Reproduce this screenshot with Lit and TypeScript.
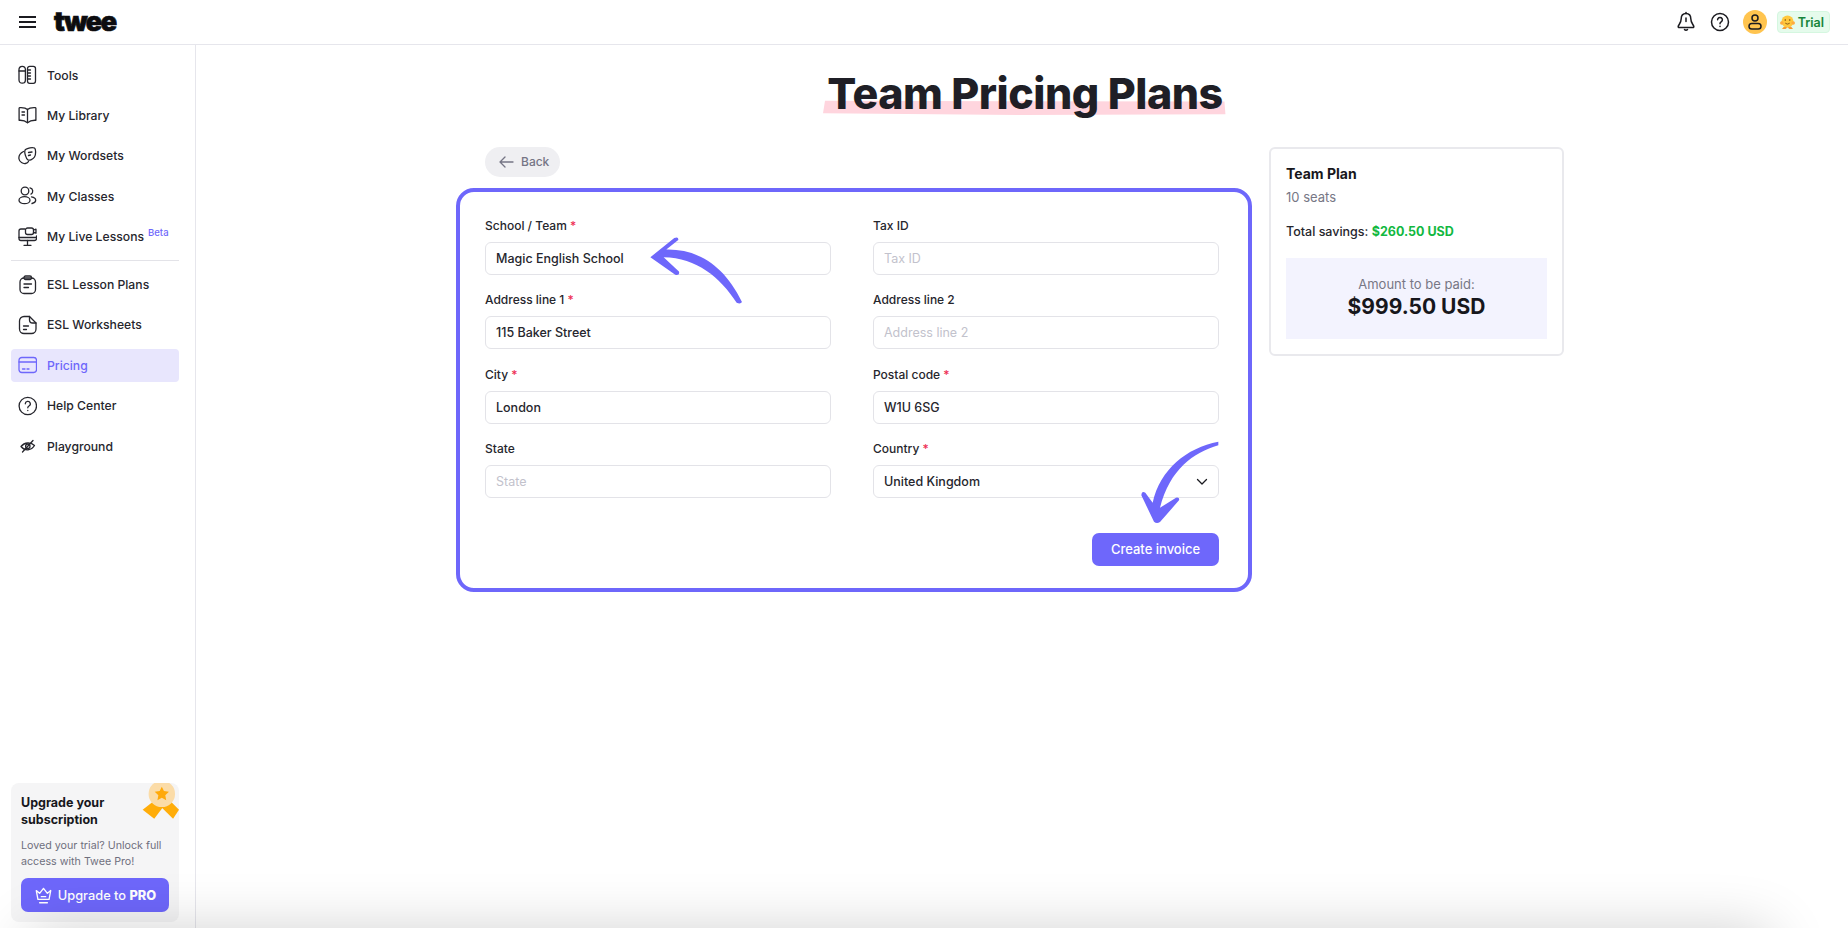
import { LitElement, html, css, svg } from 'lit';
import { customElement } from 'lit/decorators.js';

const navTop = [
  {
    label: 'Tools',
    icon: svg`<path d="M1 4.500a3.200 3.200 0 0 1 6.400 0V15a3.200 3.200 0 0 1-6.400 0z"/><path d="M1 6h6.400"/><rect x="9.500" y="1.300" width="8" height="17" rx="2.200"/><path d="M9.500 5h3M9.500 8h3M9.500 11h3M9.500 14h3"/>`,
  },
  {
    label: 'My Library',
    icon: svg`<path d="M9.500 4.500C8 3 5 2.400 1.700 2.600a.7.7 0 0 0-.6.7v12c3.200-.2 6.100.4 8.400 2.400 2.300-2 5.200-2.600 8.400-2.400v-12a.7.7 0 0 0-.6-.7C14 2.400 11 3 9.500 4.500z"/><path d="M9.500 4.500v13M4 7h2.500M4 10h2.500"/>`,
  },
  {
    label: 'My Wordsets',
    icon: svg`<path d="M7.500 3.500c2-1.500 7-2.500 9-1.500 1.500 1 1.500 6.500 0 9-1.200 2-5 3.800-6.500 3-1.800-1-4.500-8.500-2.500-10.500z"/><path d="M10.500 6.500l3.500-.5M10.500 9.500l2-.5"/><path d="M5.500 5.500C2.500 7 .5 10 1 13c.5 3 4 5 6.500 4.500 1.500-.3 2.500-1 3-2"/>`,
  },
  {
    label: 'My Classes',
    icon: svg`<circle cx="7" cy="5" r="3.800"/><ellipse cx="6.500" cy="14.200" rx="5.500" ry="3.500"/><path d="M12 1.800a3.400 3.400 0 0 1 1 6.300M13.500 10.800c2.500.4 4.200 1.800 4.200 3.500 0 1.500-1.500 2.700-3.700 3.200"/>`,
  },
  {
    label: 'My Live Lessons',
    beta: true,
    icon: svg`<path d="M7 2H3a2 2 0 0 0-2 2v7.500a2 2 0 0 0 2 2h13.500a2 2 0 0 0 2-2V9"/><path d="M1 10.500h17.500M9.500 13.500v4.500M6 18.300h7"/><rect x="7.500" y="1" width="8" height="6.500" rx="2"/><path d="M15.500 3l2.500-.8v4L15.500 5.500"/>`,
  },
];

const navBottom = [
  {
    label: 'ESL Lesson Plans',
    icon: svg`<rect x="2" y="3" width="15.500" height="15.500" rx="4"/><rect x="6" y="1" width="7.500" height="3.500" rx="1.500"/><path d="M6 9h7.500M6 12.500h4.500"/>`,
  },
  {
    label: 'ESL Worksheets',
    icon: svg`<path d="M11.500 1.500H6A4.500 4.500 0 0 0 1.500 6v8A4.500 4.500 0 0 0 6 18.500h7.500a4.500 4.500 0 0 0 4.500-4.500V8z"/><path d="M11.500 1.500V5a3 3 0 0 0 3 3H18"/><path d="M5.500 11h5M5.500 14.500h3"/>`,
  },
  {
    label: 'Pricing',
    active: true,
    icon: svg`<rect x="1" y="2.500" width="17.500" height="15" rx="2.800"/><path d="M1 7h17.500M4.500 14h2.500M9 14h2"/>`,
  },
  {
    label: 'Help Center',
    icon: svg`<circle cx="9.800" cy="10" r="8.700"/><path d="M7.300 7.800a2.500 2.500 0 1 1 3.700 2.200c-.8.500-1.200 1-1.200 1.800"/><path d="M9.800 14.300v.2"/>`,
  },
  {
    label: 'Playground',
    icon: svg`<path d="M3 10.500c3.500-4.500 10-4.500 13.500-1-3 5-9.500 6-13.500 1z"/><circle cx="9.800" cy="10.300" r="2.200"/><path d="M4.500 16L15 4.500"/>`,
  },
];

const rows = [
  [
    { label: 'School / Team', req: true, value: 'Magic English School' },
    { label: 'Tax ID', placeholder: 'Tax ID' },
  ],
  [
    { label: 'Address line 1', req: true, value: '115 Baker Street' },
    { label: 'Address line 2', placeholder: 'Address line 2' },
  ],
  [
    { label: 'City', req: true, value: 'London' },
    { label: 'Postal code', req: true, value: 'W1U 6SG' },
  ],
  [
    { label: 'State', placeholder: 'State' },
    { label: 'Country', req: true, value: 'United Kingdom', select: true },
  ],
];

@customElement('app-root')
export class AppRoot extends LitElement {
  static styles = css`
    :host {
      display: flex;
      flex-direction: column;
      position: relative;
      height: 928px;
      overflow: hidden;
      background: #fff;
      color: #1f1f26;
      font-family: Inter, 'Noto Sans', sans-serif;
      font-size: 13px;
    }

    .header {
      display: flex;
      align-items: center;
      height: 44px;
      padding: 0 18px 0 19px;
      border-bottom: 1px solid #e6e6ec;
      flex: none;
    }

    .menu {
      width: 17px;
      height: 12px;
      margin-right: 18px;
      border-top: 2px solid #1b1b20;
      border-bottom: 2px solid #1b1b20;
      position: relative;
      box-sizing: border-box;
    }

    .menu::after {
      content: '';
      position: absolute;
      left: 0;
      right: 0;
      top: 3px;
      height: 2px;
      background: #1b1b20;
    }

    .logo {
      font-size: 27px;
      font-weight: 900;
      letter-spacing: -1.500px;
      line-height: 1;
      color: #0c0c0f;
      -webkit-text-stroke: 0.7px #0c0c0f;
      position: relative;
      top: -1px;
    }

    .header-right {
      margin-left: auto;
      display: flex;
      align-items: center;
    }

    .header-right svg {
      fill: none;
      stroke: #1b1b20;
      stroke-width: 1.500;
      stroke-linecap: round;
      stroke-linejoin: round;
    }

    .help-icon {
      margin-left: 14px;
    }

    .avatar {
      width: 24px;
      height: 24px;
      border-radius: 50%;
      background: #ffc44f;
      display: flex;
      align-items: center;
      justify-content: center;
      margin: 0 10px 0 13px;
    }

    .trial {
      display: flex;
      align-items: center;
      gap: 3px;
      height: 20px;
      padding: 0 5px 0 2px;
      border-radius: 4px;
      background: #e5fbec;
      border: 1px solid #d5f7e0;
      color: #17853a;
      font-size: 12.500px;
      font-weight: 600;
    }

    .trial svg {
      stroke: none;
    }

    .body {
      display: flex;
      flex: 1;
      min-height: 0;
    }

    .sidebar {
      width: 195px;
      flex: none;
      border-right: 1px solid #e6e6ec;
      display: flex;
      flex-direction: column;
      padding-top: 13.500px;
    }

    .nav {
      display: flex;
      flex-direction: column;
      gap: 7.400px;
      margin: 0 16px 0 11px;
    }

    .nav-item {
      display: flex;
      align-items: center;
      gap: 10px;
      height: 33px;
      padding-left: 7px;
      border-radius: 4px;
      color: #26262d;
      font-size: 12.200px;
      font-weight: 500;
      white-space: nowrap;
    }

    .nav-item svg {
      width: 19px;
      height: 20px;
      flex: none;
      fill: none;
      stroke: currentColor;
      stroke-width: 1.300;
      stroke-linecap: round;
      stroke-linejoin: round;
    }

    .nav-item.active {
      background: #e8e6fd;
      color: #6e67fb;
    }

    .beta {
      font-size: 9.500px;
      color: #6e67fb;
      margin-left: -6px;
      position: relative;
      top: -4px;
    }

    .divider {
      height: 1px;
      background: #e3e3e8;
      margin: 7px 16px 7px 11px;
    }

    .upgrade {
      margin: auto 16px 6px 11px;
      height: 139px;
      box-sizing: border-box;
      padding: 11px 10px 10px;
      background: #f5f5f6;
      border-radius: 8px;
      position: relative;
      overflow: hidden;
      display: flex;
      flex-direction: column;
    }

    .upgrade h4 {
      margin: 0;
      font-size: 12.500px;
      line-height: 17px;
      font-weight: 700;
      color: #17171c;
    }

    .upgrade p {
      margin: 10px 0 0;
      font-size: 10.700px;
      line-height: 15.500px;
      color: #6f6f7d;
    }

    .ribbon {
      position: absolute;
      right: 0;
      top: 0;
      width: 38px;
      height: 38px;
    }

    .upgrade-btn {
      margin-top: auto;
      height: 34px;
      border-radius: 7px;
      background: #6e67fb;
      color: #fff;
      display: flex;
      align-items: center;
      justify-content: center;
      gap: 5px;
      font-size: 12.800px;
      font-weight: 500;
    }

    .upgrade-btn b {
      font-weight: 800;
    }

    .upgrade-btn svg {
      fill: none;
      stroke: #fff;
      stroke-width: 1.200;
      stroke-linecap: round;
      stroke-linejoin: round;
    }

    .main {
      flex: 1;
      min-width: 0;
      display: flex;
      flex-direction: column;
      padding-top: 25.500px;
      padding-left: 260px;
    }

    .title-wrap {
      width: 1108px;
      display: flex;
      justify-content: center;
      padding-left: 30px;
      box-sizing: border-box;
    }

    .title {
      margin: 0;
      font-size: 43px;
      line-height: 44px;
      font-weight: 800;
      letter-spacing: -0.500px;
      color: #1f1f26;
      position: relative;
      z-index: 0;
      padding: 0 4px;
      white-space: nowrap;
    }

    .title svg {
      position: absolute;
      left: 0;
      bottom: -1px;
      width: 100%;
      height: 18px;
      z-index: -1;
    }

    .content {
      display: flex;
      gap: 17px;
      margin-top: 32px;
      align-items: flex-start;
    }

    .left {
      width: 796px;
      flex: none;
    }

    .back {
      display: inline-flex;
      align-items: center;
      gap: 7px;
      height: 30px;
      margin-left: 29px;
      padding: 0 11px 0 14px;
      border-radius: 15px;
      background: #efeff2;
      color: #757585;
      font-size: 12px;
      font-weight: 500;
      box-sizing: border-box;
    }

    .back svg {
      fill: none;
      stroke: #757585;
      stroke-width: 1.300;
      stroke-linecap: round;
      stroke-linejoin: round;
    }

    .card {
      margin-top: 11px;
      height: 404px;
      box-sizing: border-box;
      border: 4px solid #6e67fb;
      border-radius: 18px;
      padding: 25px 29px 22px 25px;
      display: flex;
      flex-direction: column;
      position: relative;
    }

    .form {
      display: grid;
      grid-template-columns: 346px 346px;
      column-gap: 42px;
      row-gap: 16.600px;
    }

    .field label {
      display: block;
      font-size: 12px;
      line-height: 18px;
      font-weight: 500;
      color: #26262d;
      margin-bottom: 7px;
    }

    .req {
      color: #ee2f55;
    }

    .input {
      height: 33px;
      box-sizing: border-box;
      border: 1px solid #e3e3e8;
      border-radius: 6px;
      padding: 0 10px;
      display: flex;
      align-items: center;
      justify-content: space-between;
      font-size: 12.500px;
      font-weight: 500;
      color: #26262d;
    }

    .input.empty {
      color: #c2c2cc;
      font-weight: 400;
    }

    .input svg {
      fill: none;
      stroke: #1b1b20;
      stroke-width: 1.300;
      stroke-linecap: round;
      stroke-linejoin: round;
    }

    .actions {
      margin-top: auto;
      display: flex;
      justify-content: flex-end;
    }

    .create {
      width: 127px;
      height: 33px;
      border-radius: 7px;
      background: #6e67fb;
      color: #fff;
      display: flex;
      align-items: center;
      justify-content: center;
      font-size: 13px;
      font-weight: 500;
    }

    .arrow {
      position: absolute;
      fill: #6e67fb;
      overflow: visible;
    }

    .arrow.one {
      left: 187px;
      top: 42px;
    }

    .arrow.two {
      left: 680px;
      top: 249px;
    }

    .summary {
      width: 295px;
      flex: none;
      box-sizing: border-box;
      height: 209px;
      border: 2px solid #e9e9ed;
      border-radius: 6px;
      padding: 15px 15px 0;
    }

    .summary h3 {
      margin: 0;
      font-size: 14px;
      line-height: 20px;
      font-weight: 700;
      color: #17171c;
    }

    .seats {
      margin-top: 4px;
      line-height: 18px;
      color: #777785;
    }

    .savings {
      margin-top: 17px;
      font-size: 12.500px;
      line-height: 18px;
      font-weight: 500;
      color: #26262d;
    }

    .savings b {
      color: #12b83f;
      font-weight: 700;
    }

    .amount {
      margin-top: 17px;
      height: 81px;
      background: #f3f3fe;
      display: flex;
      flex-direction: column;
      align-items: center;
      justify-content: center;
    }

    .amount span {
      color: #777785;
      line-height: 18px;
    }

    .amount strong {
      font-size: 21px;
      line-height: 28px;
      font-weight: 700;
      color: #17171c;
    }

    .shade {
      position: absolute;
      left: 50px;
      width: 1700px;
      top: 952px;
      height: 40px;
      box-shadow: 0 0 60px 20px rgba(0, 0, 0, 0.2);
      pointer-events: none;
    }
  `;

  renderNav(item: any) {
    return html`
      <div class="nav-item ${item.active ? 'active' : ''}">
        <svg viewBox="0 0 19 20">${item.icon}</svg>
        <span>${item.label}</span>
        ${item.beta ? html`<span class="beta">Beta</span>` : ''}
      </div>
    `;
  }

  renderField(f: any) {
    return html`
      <div class="field">
        <label>${f.label}${f.req ? html` <span class="req">*</span>` : ''}</label>
        <div class="input ${f.value ? '' : 'empty'}">
          <span>${f.value || f.placeholder}</span>
          ${f.select
            ? html`<svg width="12" height="8" viewBox="0 0 12 8"><path d="M1.500 1.500L6 6l4.500-4.500"/></svg>`
            : ''}
        </div>
      </div>
    `;
  }

  render() {
    return html`
      <div class="header">
        <div class="menu"></div>
        <div class="logo">twee</div>
        <div class="header-right">
          <svg width="20" height="22" viewBox="0 0 20 22">
            <path d="M10 2.500c-3 0-4.800 2.200-4.800 5.300 0 4-2.700 6-3 7.700-.1.800.4 1 1 1h13.600c.6 0 1.100-.2 1-1-.3-1.700-3-3.700-3-7.700 0-3.100-1.800-5.300-4.800-5.300z"/>
            <path d="M10 1.500v1M8.500 18.500a2 2 0 0 0 3 0M10 7v3.500"/>
          </svg>
          <svg class="help-icon" width="20" height="20" viewBox="0 0 20 20">
            <circle cx="10" cy="10" r="8.500"/>
            <path d="M7.600 7.800a2.400 2.400 0 1 1 3.600 2.100c-.8.500-1.200 1-1.200 1.800M10 14.200v.2"/>
          </svg>
          <div class="avatar">
            <svg width="14" height="16" viewBox="0 0 14 16">
              <circle cx="7" cy="4" r="3"/>
              <rect x="1" y="9.500" width="12" height="5.500" rx="2.750"/>
            </svg>
          </div>
          <div class="trial">
            <svg width="15" height="15" viewBox="0 0 15 15">
              <circle cx="7.500" cy="6.500" r="6" fill="#ffc83d"/>
              <circle cx="1.800" cy="8" r="1.800" fill="#ffab40"/>
              <circle cx="13.200" cy="8" r="1.800" fill="#ffab40"/>
              <path d="M4 11.500l-2 2.500h3.500l2-1.500 2 1.500H13l-2-2.500-3.500 1z" fill="#f79b2e"/>
              <circle cx="5.300" cy="5" r=".8" fill="#7a4a10"/>
              <circle cx="9.700" cy="5" r=".8" fill="#7a4a10"/>
              <path d="M5 7.500c1.500 1.500 3.500 1.500 5 0-.4 2.500-4.600 2.500-5 0z" fill="#7a4a10"/>
            </svg>
            Trial
          </div>
        </div>
      </div>
      <div class="body">
        <aside class="sidebar">
          <div class="nav">${navTop.map((i) => this.renderNav(i))}</div>
          <div class="divider"></div>
          <div class="nav">${navBottom.map((i) => this.renderNav(i))}</div>
          <div class="upgrade">
            <svg class="ribbon" viewBox="425 39 115 115">
              <path d="M462 95L430 120L465 147L492 112Z" fill="#ffad0a"/>
              <path d="M515 95L540 120L522 147L486 112Z" fill="#ffad0a"/>
              <circle cx="488" cy="72" r="40" fill="#fbdca8"/>
              <path d="M488 50l6.500 13.500 15 2-11 10.500 2.800 15-13.300-7.300-13.300 7.300 2.800-15-11-10.500 15-2z" fill="#ffa90a"/>
            </svg>
            <h4>Upgrade your<br />subscription</h4>
            <p>Loved your trial? Unlock full access with Twee Pro!</p>
            <div class="upgrade-btn">
              <svg width="19" height="20" viewBox="0 0 17 18">
                <path d="M2 5l3 2.500L8.500 3 12 7.500 15 5l-1.500 8h-10z"/>
                <path d="M5 16h7M6.500 10.500h4"/>
              </svg>
              <span>Upgrade to <b>PRO</b></span>
            </div>
          </div>
        </aside>
        <main class="main">
          <div class="title-wrap">
            <h1 class="title">
              <svg viewBox="0 0 400 20" preserveAspectRatio="none">
                <path d="M2 3l396 1 1 14-200 1L0 17z" fill="#ffd5de"/>
              </svg>
              Team Pricing Plans
            </h1>
          </div>
          <div class="content">
            <div class="left">
              <div class="back">
                <svg width="15" height="12" viewBox="0 0 15 12"><path d="M14 6H1M6 1L1 6l5 5"/></svg>
                Back
              </div>
              <div class="card">
                <div class="form">
                  ${rows.flat().map((f) => this.renderField(f))}
                </div>
                <div class="actions"><div class="create">Create invoice</div></div>
                <svg class="arrow one" width="98" height="73" viewBox="590 280 295 220">
                  <path d="M600 350L672 292Q686 287 684 298L648 327C740 325 822 372 876 485Q872 492 860 487C810 410 740 352 640 350L686 393Q690 406 675 403Z"/>
                </svg>
                <svg class="arrow two" width="79" height="84" viewBox="180 65 237 252">
                  <path d="M415 67L415 78C340 100 270 150 240 265L288 235Q300 233 297 243L240 308Q230 315 222 307L184 228Q185 213 196 220L218 250C240 150 320 85 415 67Z"/>
                </svg>
              </div>
            </div>
            <div class="summary">
              <h3>Team Plan</h3>
              <div class="seats">10 seats</div>
              <div class="savings">Total savings: <b>$260.50 USD</b></div>
              <div class="amount">
                <span>Amount to be paid:</span>
                <strong>$999.50 USD</strong>
              </div>
            </div>
          </div>
        </main>
      </div>
      <div class="shade"></div>
    `;
  }
}
